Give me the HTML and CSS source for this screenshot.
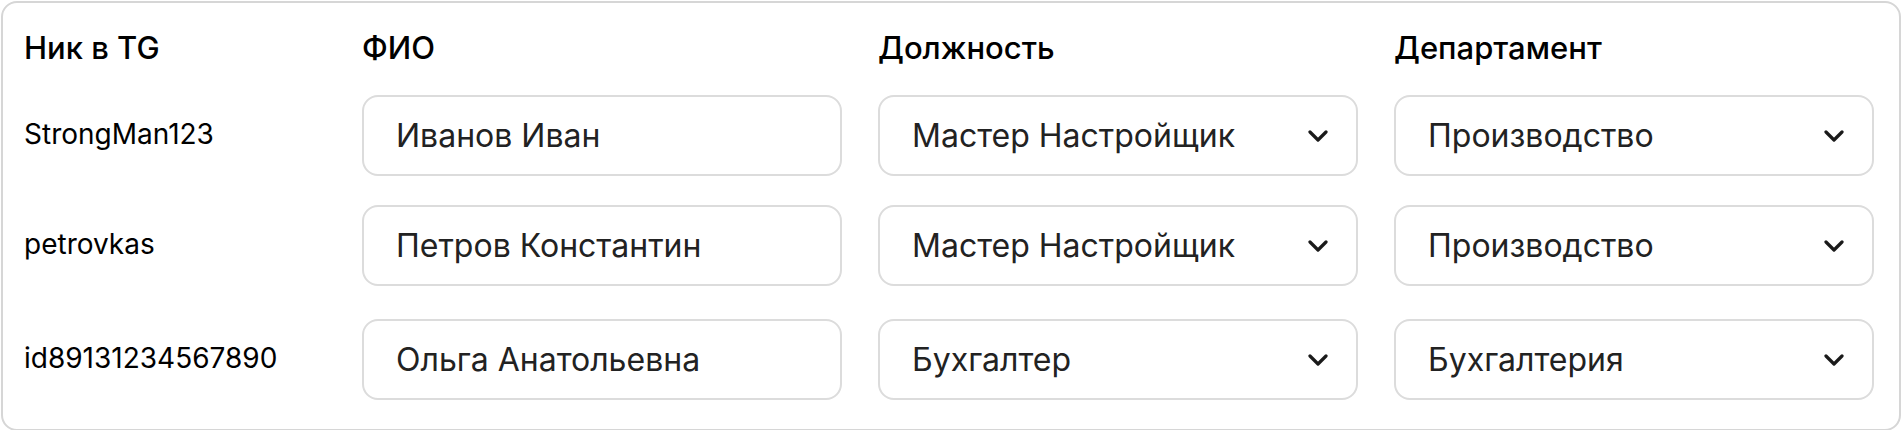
FILE: index.html
```html
<!DOCTYPE html>
<html lang="ru">
<head>
    <meta charset="UTF-8">
    <meta name="viewport" content="width=device-width, initial-scale=1.0">
    <title>Сотрудники</title>
    <link rel="stylesheet" href="styles.css">
</head>
<body>

    <div class="card">
        <div class="row head">
            <div>Ник в TG</div>
            <div>ФИО</div>
            <div>Должность</div>
            <div>Департамент</div>
        </div>

        <div class="row">
            <div class="nick">StrongMan123</div>
            <input class="field" type="text" value="Иванов Иван">
            <div class="field select">
                <span>Мастер Настройщик</span>
                <svg class="chevron" width="20" height="12" viewBox="0 0 20 12"><polyline points="2,2 10,10 18,2"/></svg>
            </div>
            <div class="field select">
                <span>Производство</span>
                <svg class="chevron" width="20" height="12" viewBox="0 0 20 12"><polyline points="2,2 10,10 18,2"/></svg>
            </div>
        </div>

        <div class="row">
            <div class="nick">petrovkas</div>
            <input class="field" type="text" value="Петров Константин">
            <div class="field select">
                <span>Мастер Настройщик</span>
                <svg class="chevron" width="20" height="12" viewBox="0 0 20 12"><polyline points="2,2 10,10 18,2"/></svg>
            </div>
            <div class="field select">
                <span>Производство</span>
                <svg class="chevron" width="20" height="12" viewBox="0 0 20 12"><polyline points="2,2 10,10 18,2"/></svg>
            </div>
        </div>

        <div class="row last">
            <div class="nick">id89131234567890</div>
            <input class="field" type="text" value="Ольга Анатольевна">
            <div class="field select">
                <span>Бухгалтер</span>
                <svg class="chevron" width="20" height="12" viewBox="0 0 20 12"><polyline points="2,2 10,10 18,2"/></svg>
            </div>
            <div class="field select">
                <span>Бухгалтерия</span>
                <svg class="chevron" width="20" height="12" viewBox="0 0 20 12"><polyline points="2,2 10,10 18,2"/></svg>
            </div>
        </div>
    </div>

</body>
</html>
```

FILE: styles.css
```css
body {
    margin: 0;
    font-family: 'Inter', 'Noto Sans', sans-serif;
    background-color: #fff;
    color: #000;
}

.card {
    margin: 1px;
    border: 2px solid #d6d6d6;
    border-radius: 16px;
    padding: 27px 25px 29px 21px;
}

.row {
    display: grid;
    grid-template-columns: 302px 480px 480px 480px;
    column-gap: 36px;
    align-items: center;
}

.head {
    font-size: 31px;
    font-weight: 500;
    line-height: 36px;
}

.head + .row {
    margin-top: 25px;
}

.row + .row {
    margin-top: 29px;
}

.row.last {
    margin-top: 33px;
}

.nick {
    font-size: 28px;
    line-height: 34px;
    padding-bottom: 3px;
}

.field {
    box-sizing: border-box;
    height: 81px;
    width: 480px;
    border: 2px solid #dcdcdc;
    border-radius: 16px;
    padding: 0 28px 0 32px;
    font-family: 'Inter', 'Noto Sans', sans-serif;
    font-size: 32px;
    color: #222;
    background-color: #fff;
    outline: none;
    margin: 0;
}

.select {
    display: flex;
    align-items: center;
    justify-content: space-between;
}

.chevron {
    fill: none;
    stroke: #1a1a1a;
    stroke-width: 3.2;
    stroke-linecap: round;
    stroke-linejoin: round;
}
```
